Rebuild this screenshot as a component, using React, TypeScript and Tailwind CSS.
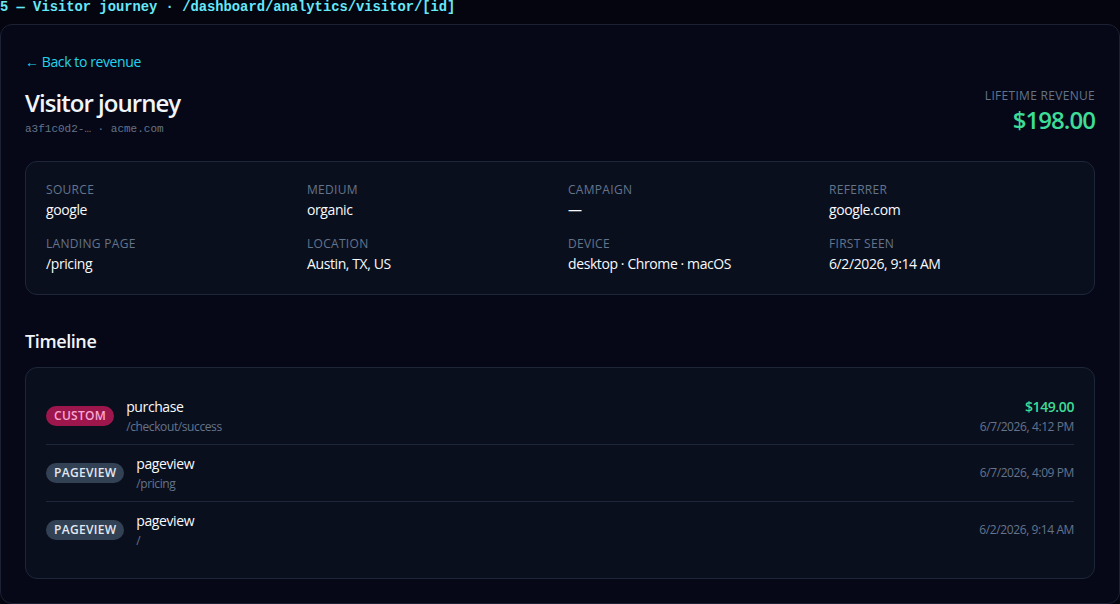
import React from "react";

type Attr = { label: string; value: string };

const attrs: Attr[] = [
    { label: "Source", value: "google" },
    { label: "Medium", value: "organic" },
    { label: "Campaign", value: "—" },
    { label: "Referrer", value: "google.com" },
    { label: "Landing page", value: "/pricing" },
    { label: "Location", value: "Austin, TX, US" },
    { label: "Device", value: "desktop · Chrome · macOS" },
    { label: "First seen", value: "6/2/2026, 9:14 AM" },
];

type Event = {
    kind: "custom" | "pageview";
    name: string;
    path: string;
    amount?: string;
    time: string;
};

const events: Event[] = [
    { kind: "custom", name: "purchase", path: "/checkout/success", amount: "$149.00", time: "6/7/2026, 4:12 PM" },
    { kind: "pageview", name: "pageview", path: "/pricing", time: "6/7/2026, 4:09 PM" },
    { kind: "pageview", name: "pageview", path: "/", time: "6/2/2026, 9:14 AM" },
];

function Badge({ kind }: { kind: Event["kind"] }) {
    const cls =
        kind === "custom"
            ? "bg-[#9d174d] text-[#f9a8d4]"
            : "bg-[#334155] text-[#e2e8f0]";
    return (
        <span className={`inline-flex h-5 items-center rounded-full px-2 text-xs font-semibold uppercase leading-4 tracking-wide ${cls}`}>
            {kind}
        </span>
    );
}

export default function App() {
    return (
        <div className="min-h-screen bg-[#04050f] font-['Open_Sans',sans-serif] tracking-[-0.025em] text-[#f1f5f9]">

            {/* screen label */}
            <div className="h-6 whitespace-nowrap font-['Liberation_Mono',monospace] text-[13.8px] font-bold leading-4 tracking-normal text-[#67e8f9]">
                5 — Visitor journey · /dashboard/analytics/visitor/[id]
            </div>

            {/* PANEL */}
            <div className="rounded-xl border border-[#1c2134] bg-[#060817] px-6 pb-6 pt-[27px]">

                <a className="block text-sm leading-5 text-[#22d3ee]">← Back to revenue</a>

                {/* HEADER */}
                <div className="mt-[15px] flex items-start justify-between">
                    <div>
                        <h1 className="text-2xl font-semibold leading-8 tracking-[-0.04em] text-[#f1f5f9]">Visitor journey</h1>
                        <p className="mt-0.5 font-['Liberation_Mono',monospace] text-[11px] leading-4 tracking-normal text-[#64748b]">
                            a3f1c0d2-… · acme.com
                        </p>
                    </div>
                    <div className="mt-px text-right">
                        <p className="text-xs uppercase leading-4 tracking-wide text-[#64748b]">Lifetime revenue</p>
                        <p className="text-2xl font-semibold leading-8 tracking-[-0.04em] text-[#3ddc97]">$198.00</p>
                    </div>
                </div>

                {/* ATTRIBUTES */}
                <div className="mt-6 grid grid-cols-4 gap-x-4 gap-y-4 rounded-xl border border-[#1e263a] bg-[#0a0f1e] p-5">
                    {attrs.map((a) => (
                        <div key={a.label}>
                            <p className="text-xs uppercase leading-4 tracking-wide text-[#64748b]">{a.label}</p>
                            <p className="mt-0.5 text-sm leading-5 text-[#f8fafc]">{a.value}</p>
                        </div>
                    ))}
                </div>

                {/* TIMELINE */}
                <h2 className="mt-8 mb-3 text-lg font-semibold leading-7 text-[#f1f5f9]">Timeline</h2>

                <div className="rounded-xl border border-[#1e263a] bg-[#0a0f1e] px-5 py-5">
                    {events.map((e, i) => (
                        <div
                            key={i}
                            className={`flex items-center justify-between py-[9px] ${i < events.length - 1 ? "border-b border-[#1e263a]" : ""}`}
                        >
                            <div className="flex items-center gap-3">
                                <Badge kind={e.kind} />
                                <div>
                                    <p className="text-sm leading-5 text-[#f8fafc]">{e.name}</p>
                                    <p className="mt-0.5 text-xs leading-4 text-[#64748b]">{e.path}</p>
                                </div>
                            </div>
                            <div className="text-right">
                                {e.amount && (
                                    <p className="text-sm font-semibold leading-5 text-[#3ddc97]">{e.amount}</p>
                                )}
                                <p className={`${e.amount ? "mt-0.5" : ""} text-xs leading-4 text-[#64748b]`}>{e.time}</p>
                            </div>
                        </div>
                    ))}
                </div>

            </div>
        </div>
    );
}
